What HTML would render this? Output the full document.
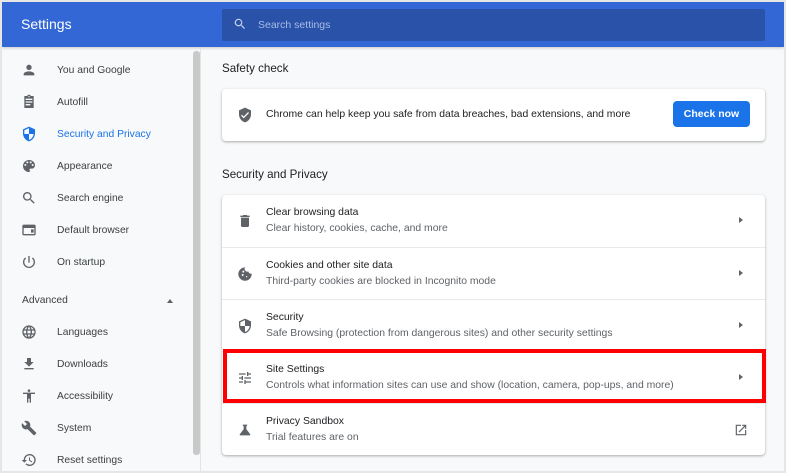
<!DOCTYPE html>
<html><head><meta charset="utf-8"><style>
*{box-sizing:border-box;margin:0;padding:0}
body{width:786px;height:473px;background:#e6e6e6;font-family:"Liberation Sans",Arial,sans-serif;overflow:hidden;position:relative}
.frame{position:absolute;left:2px;top:2px;width:782px;height:469px;background:#f8f9fa;overflow:hidden}
.hdr{position:absolute;left:0;top:0;width:782px;height:45px;background:#3367d6;box-shadow:0 1px 3px rgba(0,0,0,.2)}
.hdr .t{position:absolute;left:19px;top:14px;color:#fff;font-size:14px}
.search{position:absolute;left:220px;top:7px;width:543px;height:32px;background:#2a52a8;border-radius:2px}
.search span{position:absolute;left:36px;top:10px;color:#a8bde6;font-size:10.5px}
.search svg{position:absolute;left:11px;top:8px}
.side{position:absolute;left:0;top:45px;width:199px;height:424px;border-right:1px solid #e4e4e4}
.sb{position:absolute;left:191px;top:49px;width:7px;height:404px;background:#c9c9c9;border-radius:3px}
.it{position:absolute;left:0;height:20px;font-size:10.3px;color:#3c4043}
.it svg{position:absolute;left:19px;top:1px}
.it span{position:absolute;left:55px;top:4px;white-space:nowrap}
.h2{position:absolute;left:220px;font-size:11.6px;color:#202124}
.card{position:absolute;left:220px;width:543px;background:#fff;border-radius:4px;box-shadow:0 1px 2px rgba(60,64,67,.3),0 1px 3px rgba(60,64,67,.15)}
.row{position:absolute;left:0;width:543px;height:52px;border-top:1px solid #e8eaed}
.row .a{position:absolute;left:44px;top:12px;font-size:10.4px;color:#202124;white-space:nowrap}
.row .b{position:absolute;left:44px;top:28px;font-size:10.4px;color:#5f6368;white-space:nowrap}
.row svg.ic{position:absolute;left:15px;top:18px}
.arr{position:absolute;left:517px;top:22px;width:0;height:0;border-top:3.5px solid transparent;border-bottom:3.5px solid transparent;border-left:4px solid #5f6368}
.btn{position:absolute;left:451px;top:12px;width:77px;height:26px;background:#1a73e8;border-radius:4px;color:#fff;font-size:10.5px;font-weight:bold;text-align:center;line-height:26px}
.red{position:absolute;left:221px;top:347px;width:543px;height:54px;border:4px solid #f00}
</style></head><body><div class="frame">
<div class="hdr"><div class="t">Settings</div>
<div class="search"><svg width="14" height="14" viewBox="0 0 24 24"><path d="M15.5 14h-.8l-.3-.3A6.5 6.5 0 1 0 9.5 16a6.5 6.5 0 0 0 4.2-1.6l.3.3v.8l5 5 1.5-1.5-5-5zm-6 0a4.5 4.5 0 1 1 0-9 4.5 4.5 0 0 1 0 9z" fill="#c5d3f0"/></svg><span>Search settings</span></div></div>
<div class="side">
<div class="it" style="top:14px"><svg width="16" height="16" viewBox="0 0 24 24" fill="#5f6368"><path d="M12 12a4 4 0 1 0 0-8 4 4 0 0 0 0 8zm0 2c-2.7 0-8 1.3-8 4v2h16v-2c0-2.7-5.3-4-8-4z"/></svg><span>You and Google</span></div>
<div class="it" style="top:46px"><svg width="16" height="16" viewBox="0 0 24 24" fill="#5f6368"><path d="M19 3h-4.2A3 3 0 0 0 12 1a3 3 0 0 0-2.8 2H5v18h14V3zm-7 0a1 1 0 1 1 0 2 1 1 0 0 1 0-2zm2 14H7v-2h7v2zm3-4H7v-2h10v2zm0-4H7V7h10v2z"/></svg><span>Autofill</span></div>
<div class="it" style="top:78px;color:#1a73e8"><svg width="16" height="16" viewBox="0 0 24 24" fill="#1a73e8"><path d="M12 1L3 5v6c0 5.5 3.8 10.7 9 12 5.2-1.3 9-6.5 9-12V5l-9-4zm0 11h7c-.5 4.1-3.3 7.8-7 8.9V12H5V6.3l7-3.1V12z"/></svg><span>Security and Privacy</span></div>
<div class="it" style="top:110px"><svg width="16" height="16" viewBox="0 0 24 24" fill="#5f6368"><path d="M12 3a9 9 0 0 0 0 18c.8 0 1.5-.7 1.5-1.5 0-.4-.1-.7-.4-1-.2-.3-.4-.6-.4-1 0-.8.7-1.5 1.5-1.5H16a5 5 0 0 0 5-5c0-4.4-4-8-9-8zm-5.5 9a1.5 1.5 0 1 1 0-3 1.5 1.5 0 0 1 0 3zm3-4a1.5 1.5 0 1 1 0-3 1.5 1.5 0 0 1 0 3zm5 0a1.5 1.5 0 1 1 0-3 1.5 1.5 0 0 1 0 3zm3 4a1.5 1.5 0 1 1 0-3 1.5 1.5 0 0 1 0 3z"/></svg><span>Appearance</span></div>
<div class="it" style="top:142px"><svg width="16" height="16" viewBox="0 0 24 24" fill="#5f6368"><path d="M15.5 14h-.8l-.3-.3A6.5 6.5 0 1 0 9.5 16a6.5 6.5 0 0 0 4.2-1.6l.3.3v.8l5 5 1.5-1.5-5-5zm-6 0a4.5 4.5 0 1 1 0-9 4.5 4.5 0 0 1 0 9z"/></svg><span>Search engine</span></div>
<div class="it" style="top:174px"><svg width="16" height="16" viewBox="0 0 24 24" fill="#5f6368"><path d="M20 4H4c-1.1 0-2 .9-2 2v12c0 1.1.9 2 2 2h16c1.1 0 2-.9 2-2V6c0-1.1-.9-2-2-2zm0 14H4V9h16v9zM15 11h4v5h-4z"/></svg><span>Default browser</span></div>
<div class="it" style="top:206px"><svg width="16" height="16" viewBox="0 0 24 24" fill="#5f6368"><path d="M13 3h-2v10h2V3zm4.8 2.2l-1.4 1.4A7 7 0 1 1 7.6 6.6L6.2 5.2A9 9 0 1 0 17.8 5.2z"/></svg><span>On startup</span></div>
<div class="it" style="top:244px"><span style="left:20px">Advanced</span><div style="position:absolute;left:165px;top:8px;border-left:3.5px solid transparent;border-right:3.5px solid transparent;border-bottom:4px solid #5f6368"></div></div>
<div class="it" style="top:276px"><svg width="16" height="16" viewBox="0 0 24 24" fill="#5f6368"><path d="M12 2a10 10 0 1 0 0 20 10 10 0 0 0 0-20zm6.9 6h-3a15.6 15.6 0 0 0-1.3-3.6A8 8 0 0 1 18.9 8zM12 4c.8 1.2 1.5 2.5 1.9 4h-3.8c.4-1.4 1.1-2.8 1.9-4zM4.3 14a8 8 0 0 1 0-4h3.4a16 16 0 0 0 0 4H4.3zm.8 2h3c.3 1.3.8 2.5 1.3 3.6A8 8 0 0 1 5.1 16zm3-8h-3a8 8 0 0 1 4.3-3.6C8.9 5.5 8.4 6.7 8.1 8zM12 20c-.8-1.2-1.5-2.5-1.900-4h3.8c-.4 1.4-1.1 2.8-1.9 4zm2.3-6H9.7a14.7 14.7 0 0 1 0-4h4.6a14.7 14.7 0 0 1 0 4zm.3 5.6c.6-1.100 1-2.300 1.3-3.6h3a8 8 0 0 1-4.3 3.6zm1.8-5.6a16 16 0 0 0 0-4h3.4a8 8 0 0 1 0 4h-3.4z"/></svg><span>Languages</span></div>
<div class="it" style="top:308px"><svg width="16" height="16" viewBox="0 0 24 24" fill="#5f6368"><path d="M19 9h-4V3H9v6H5l7 7 7-7zM5 18v2h14v-2H5z"/></svg><span>Downloads</span></div>
<div class="it" style="top:340px"><svg width="16" height="16" viewBox="0 0 24 24" fill="#5f6368"><path d="M12 2a2 2 0 1 1 0 4 2 2 0 0 1 0-4zm9 7h-6v13h-2v-6h-2v6H9V9H3V7h18v2z"/></svg><span>Accessibility</span></div>
<div class="it" style="top:372px"><svg width="16" height="16" viewBox="0 0 24 24" fill="#5f6368"><path d="M22.7 19l-9.1-9.1c.9-2.3.4-5-1.5-6.9-2-2-5-2.4-7.4-1.3L9 6 6 9 1.6 4.7C.4 7.1.9 10.1 2.9 12.1c1.9 1.9 4.6 2.4 6.9 1.5l9.1 9.1c.4.4 1 .4 1.4 0l2.3-2.3c.5-.4.5-1.1.1-1.4z"/></svg><span>System</span></div>
<div class="it" style="top:404px"><svg width="16" height="16" viewBox="0 0 24 24" fill="#5f6368"><path d="M13 3a9 9 0 0 0-9 9H1l4 4 4-4H6a7 7 0 1 1 2.1 5l-1.4 1.4A9 9 0 1 0 13 3zm-1 5v5l4.3 2.5.7-1.2-3.5-2.1V8H12z"/></svg><span>Reset settings</span></div>
</div>
<div class="sb"></div>
<div class="h2" style="top:60px">Safety check</div>
<div class="card" style="top:87px;height:52px">
<svg style="position:absolute;left:15px;top:18px" width="16" height="16" viewBox="0 0 24 24" fill="#5f6368"><path d="M12 1L3 5v6c0 5.5 3.8 10.7 9 12 5.2-1.3 9-6.5 9-12V5l-9-4zm-2 16l-4-4 1.4-1.4 2.6 2.6 6.6-6.6L18 9l-8 8z"/></svg>
<div style="position:absolute;left:44px;top:20px;font-size:10.4px;color:#202124;white-space:nowrap">Chrome can help keep you safe from data breaches, bad extensions, and more</div>
<div class="btn">Check now</div></div>
<div class="h2" style="top:166px">Security and Privacy</div>
<div class="card" style="top:193px;height:260px">
<div class="row" style="top:0;border-top:none"><svg class="ic" width="16" height="16" viewBox="0 0 24 24" fill="#5f6368"><path d="M6 19c0 1.1.9 2 2 2h8c1.1 0 2-.9 2-2V7H6v12zM19 4h-3.5l-1-1h-5l-1 1H5v2h14V4z"/></svg><div class="a">Clear browsing data</div><div class="b">Clear history, cookies, cache, and more</div><div class="arr"></div></div>
<div class="row" style="top:52px"><svg class="ic" width="16" height="16" viewBox="0 0 24 24" fill="#5f6368"><path d="M21.9 11.4A4 4 0 0 1 17 8a4 4 0 0 1-4.9-5.9A10 10 0 1 0 22 12l-.1-.6zM8.5 15a1.5 1.5 0 1 1 0-3 1.5 1.5 0 0 1 0 3zm1-5a1.5 1.5 0 1 1 0-3 1.5 1.5 0 0 1 0 3zm5 7a1 1 0 1 1 0-2 1 1 0 0 1 0 2z"/></svg><div class="a">Cookies and other site data</div><div class="b">Third-party cookies are blocked in Incognito mode</div><div class="arr"></div></div>
<div class="row" style="top:104px"><svg class="ic" width="16" height="16" viewBox="0 0 24 24" fill="#5f6368"><path d="M12 1L3 5v6c0 5.5 3.8 10.7 9 12 5.2-1.3 9-6.5 9-12V5l-9-4zm0 11h7c-.5 4.1-3.3 7.8-7 8.9V12H5V6.3l7-3.1V12z"/></svg><div class="a">Security</div><div class="b">Safe Browsing (protection from dangerous sites) and other security settings</div><div class="arr"></div></div>
<div class="row" style="top:156px"><svg class="ic" width="16" height="16" viewBox="0 0 24 24" fill="#5f6368"><path d="M3 17v2h6v-2H3zM3 5v2h10V5H3zm10 16v-2h8v-2h-8v-2h-2v6h2zM7 9v2H3v2h4v2h2V9H7zm14 4v-2H11v2h10zm-6-4h2V7h4V5h-4V3h-2v6z"/></svg><div class="a">Site Settings</div><div class="b">Controls what information sites can use and show (location, camera, pop-ups, and more)</div><div class="arr"></div></div>
<div class="row" style="top:208px"><svg class="ic" width="16" height="16" viewBox="0 0 24 24" fill="#5f6368"><path d="M19.8 18.4L14 10.7V6.5l1.4-1.7c.3-.3 0-.8-.4-.8H9c-.4 0-.7.5-.4.8L10 6.5v4.2l-5.8 7.7c-.5.7 0 1.6.8 1.6h14c.8 0 1.3-.9.8-1.6z"/></svg><div class="a">Privacy Sandbox</div><div class="b">Trial features are on</div>
<svg style="position:absolute;left:512px;top:19px" width="14" height="14" viewBox="0 0 24 24" fill="#5f6368"><path d="M19 19H5V5h7V3H3v18h18v-9h-2v7zM14 3v2h3.6l-9.8 9.8 1.4 1.4L19 6.4V10h2V3h-7z"/></svg></div>
</div>
<div class="red"></div>
</div></body></html>
